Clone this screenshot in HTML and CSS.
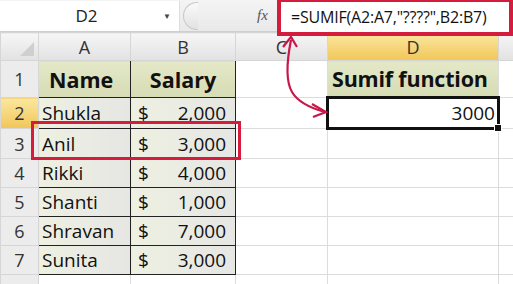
FILE: index.html
```html
<!DOCTYPE html>
<html lang="en">
<head>
    <meta charset="UTF-8">
    <title>Sumif</title>
    <link rel="stylesheet" href="styles.css">
</head>
<body>
    <div class="sheet">
        <div class="formula-bar">
            <div class="name-box">
                <span class="cell-ref">D2</span>
                <span class="drop">&#9660;</span>
            </div>
            <div class="splitter"></div>
            <div class="fx"><i>f</i>x</div>
            <div class="formula">=SUMIF(A2:A7,"????",B2:B7)</div>
        </div>
        <table class="grid">
            <colgroup>
                <col class="c-row">
                <col class="c-a">
                <col class="c-b">
                <col class="c-c">
                <col class="c-d">
                <col>
            </colgroup>
            <tr class="col-heads">
                <th class="corner"><span class="tri"></span></th>
                <th>A</th>
                <th>B</th>
                <th>C</th>
                <th class="sel">D</th>
                <th></th>
            </tr>
            <tr class="r1">
                <th>1</th>
                <td class="hd box">Name</td>
                <td class="hd box center">Salary</td>
                <td></td>
                <td class="hd tight">Sumif function</td>
                <td></td>
            </tr>
            <tr>
                <th class="sel">2</th>
                <td class="data box">Shukla</td>
                <td class="data box"><span class="cur">$</span><span class="amt">2,000</span></td>
                <td></td>
                <td class="active">3000<span class="handle"></span></td>
                <td></td>
            </tr>
            <tr>
                <th>3</th>
                <td class="data box">Anil</td>
                <td class="data box"><span class="cur">$</span><span class="amt">3,000</span></td>
                <td></td><td></td><td></td>
            </tr>
            <tr>
                <th>4</th>
                <td class="data box">Rikki</td>
                <td class="data box"><span class="cur">$</span><span class="amt">4,000</span></td>
                <td></td><td></td><td></td>
            </tr>
            <tr>
                <th>5</th>
                <td class="data box">Shanti</td>
                <td class="data box"><span class="cur">$</span><span class="amt">1,000</span></td>
                <td></td><td></td><td></td>
            </tr>
            <tr>
                <th>6</th>
                <td class="data box">Shravan</td>
                <td class="data box"><span class="cur">$</span><span class="amt">7,000</span></td>
                <td></td><td></td><td></td>
            </tr>
            <tr>
                <th>7</th>
                <td class="data box">Sunita</td>
                <td class="data box"><span class="cur">$</span><span class="amt">3,000</span></td>
                <td></td><td></td><td></td>
            </tr>
            <tr class="r8">
                <th></th><td></td><td></td><td></td><td></td><td></td>
            </tr>
        </table>

        <div class="mark-row"></div>
        <svg class="arrow" width="60" height="90" viewBox="270 30 60 90">
            <path d="M291 40 C 287 60, 285 80, 292 92 C 298 102, 310 108, 325 112" fill="none" stroke="#c8174a" stroke-width="2.2"/>
            <path d="M283 47 L291 37 L297 47" fill="none" stroke="#c8174a" stroke-width="2.2"/>
            <path d="M312 104 L326 112 L313 117" fill="none" stroke="#c8174a" stroke-width="2.2"/>
        </svg>
    </div>
</body>
</html>
```

FILE: styles.css
```css
body {
    margin: 0;
    font-family: "Open Sans", Lato, sans-serif;
    background: #fff;
}
.sheet {
    position: relative;
    width: 513px;
    height: 284px;
    overflow: hidden;
}
.formula-bar {
    display: flex;
    align-items: center;
    height: 32px;
    background: linear-gradient(#f4f4f4, #e9e9e9);
    border-bottom: 1px solid #cfcfcf;
    box-sizing: border-box;
}
.name-box {
    display: flex;
    align-items: center;
    width: 180px;
    height: 30px;
    background: #fff;
    box-sizing: border-box;
    border-right: 1px solid #ddd;
}
.cell-ref {
    flex: 1;
    text-align: center;
    font-size: 17px;
    color: #222;
    padding-left: 10px;
}
.drop {
    font-size: 8px;
    color: #444;
    margin-right: 8px;
}
.splitter {
    width: 14px;
    height: 26px;
    margin-left: 3px;
    border: 1px solid #c8c8c8;
    border-radius: 14px 0 0 14px;
    border-right: none;
    background: linear-gradient(#fafafa, #e2e2e2);
}
.fx {
    margin-left: auto;
    width: 20px;
    font-family: "Liberation Serif", serif;
    font-style: italic;
    font-size: 15px;
    color: #555;
}
.formula {
    width: 236px;
    height: 38px;
    margin-top: 2px;
    box-sizing: border-box;
    border: 4px solid #d41c3c;
    background: #fff;
    font-size: 16px;
    line-height: 30px;
    padding-left: 10px;
    color: #111;
    white-space: nowrap;
    letter-spacing: -0.2px;
}
.grid {
    border-collapse: collapse;
    table-layout: fixed;
    width: 530px;
    font-size: 19px;
}
.c-row { width: 38px; }
.c-a { width: 92px; }
.c-b { width: 105px; }
.c-c { width: 92px; }
.c-d { width: 171px; }
.grid th {
    font-weight: normal;
    color: #333;
    background: #ececec;
    border: 1px solid #d6d6d6;
    font-size: 18px;
    padding: 0;
}
.col-heads th {
    height: 27px;
    background: linear-gradient(#f6f6f6, #e2e2e2);
    color: #333;
}
.corner {
    position: relative;
}
.tri {
    position: absolute;
    right: 4px;
    bottom: 4px;
    width: 0;
    height: 0;
    border-left: 14px solid transparent;
    border-bottom: 14px solid #cfcfcf;
}
.grid th.sel {
    background: linear-gradient(#fbe7a0, #f1c658);
    color: #333;
}
.grid td {
    height: 28px;
    border: 1px solid #dcdcdc;
    padding: 0 3px;
    color: #111;
    white-space: nowrap;
}
.r1 th, .r1 td {
    height: 35px;
}
.grid td.hd {
    background: linear-gradient(#e4e8c8, #d6dcb4);
    font-weight: bold;
    font-size: 21.5px;
    padding-left: 10px;
}
.grid td.center {
    text-align: center;
    padding-left: 3px;
}
.grid td.tight {
    padding-left: 4px;
    letter-spacing: -0.2px;
}
.grid td.data {
    background: linear-gradient(90deg, #eef0e2, #e6e6e3);
}
.grid td.box {
    border: 1px solid #222;
}
.cur {
    display: inline-block;
    width: 30px;
    padding-left: 4px;
}
.amt {
    display: inline-block;
    width: 58px;
    text-align: right;
}
.grid td.active {
    position: relative;
    border: 3px solid #111;
    text-align: right;
    padding-right: 2px;
}
.handle {
    position: absolute;
    right: -5px;
    bottom: -5px;
    width: 6px;
    height: 6px;
    background: #111;
    border: 1px solid #fff;
}
.r8 th, .r8 td {
    height: 29px;
}
.mark-row {
    position: absolute;
    left: 31px;
    top: 121px;
    width: 204px;
    height: 33px;
    border: 3px solid #d41c3c;
}
.arrow {
    position: absolute;
    left: 270px;
    top: 30px;
}
```
